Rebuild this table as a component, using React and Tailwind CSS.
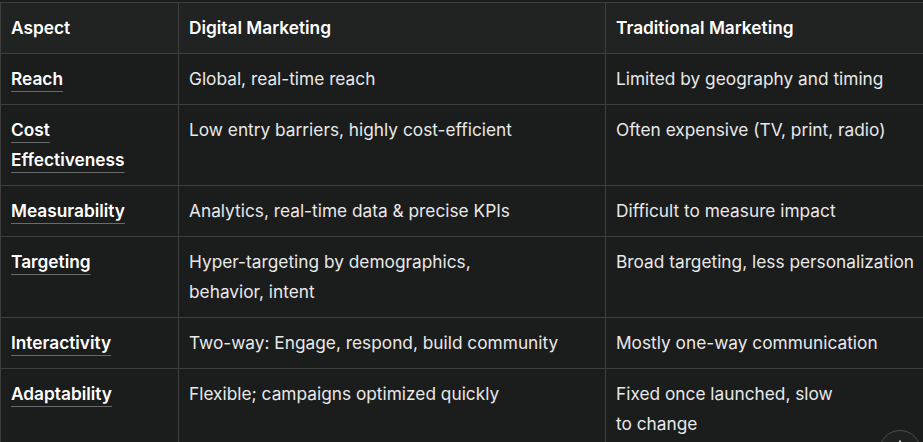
import React from 'react';

const rows = [
  { aspect: 'Reach', digital: 'Global, real-time reach', traditional: 'Limited by geography and timing' },
  { aspect: ['Cost', 'Effectiveness'], digital: 'Low entry barriers, highly cost-efficient', traditional: 'Often expensive (TV, print, radio)' },
  { aspect: 'Measurability', digital: 'Analytics, real-time data & precise KPIs', traditional: 'Difficult to measure impact' },
  { aspect: 'Targeting', digital: ['Hyper-targeting by demographics,', 'behavior, intent'], traditional: 'Broad targeting, less personalization' },
  { aspect: 'Interactivity', digital: 'Two-way: Engage, respond, build community', traditional: 'Mostly one-way communication' },
  { aspect: 'Adaptability', digital: 'Flexible; campaigns optimized quickly', traditional: ['Fixed once launched, slow', 'to change'] },
];

const lines = (v) =>
  Array.isArray(v)
    ? v.map((l, i) => (
        <React.Fragment key={i}>
          {i > 0 && <br />}
          {l}
        </React.Fragment>
      ))
    : v;

const App = () => {
  return (
    <div
      className="relative w-[923px] h-[442px] overflow-hidden bg-[#1b1c1c] pt-[2px] text-[17.3px] text-[#e9e9e9]"
      style={{ fontFamily: 'Inter, "Noto Sans", sans-serif' }}
    >
      <table className="w-[930px] table-fixed border-collapse">
        <colgroup>
          <col className="w-[178px]" />
          <col className="w-[427px]" />
          <col />
        </colgroup>
        <thead>
          <tr className="bg-[#212222]">
            {['Aspect', 'Digital Marketing', 'Traditional Marketing'].map((h) => (
              <th
                key={h}
                className="border border-[#3e3e3e] px-[10px] py-[10px] text-left font-semibold leading-[29px] pb-[11px] text-white"
              >
                {h}
              </th>
            ))}
          </tr>
        </thead>
        <tbody>
          {rows.map((r, i) => (
            <tr key={i}>
              <td className="border border-[#3e3e3e] px-[10px] pt-[10px] pb-[10px] align-top leading-[30px]">
                <span className="font-semibold text-white underline decoration-[#6a6a6a] decoration-1 underline-offset-[6px]">
                  {lines(r.aspect)}
                </span>
              </td>
              <td className="border border-[#3e3e3e] px-[10px] py-[10px] align-top leading-[30px]">
                {lines(r.digital)}
              </td>
              <td className="border border-[#3e3e3e] px-[10px] py-[10px] align-top leading-[30px]">
                {lines(r.traditional)}
              </td>
            </tr>
          ))}
        </tbody>
      </table>
      <button className="absolute left-[879px] top-[430px] flex h-[42px] w-[42px] items-start justify-center rounded-full border border-[#4a4a4a] bg-[#1f2020] pt-[8px] text-white">
        <svg width="16" height="16" viewBox="0 0 16 16" fill="none" stroke="currentColor" strokeWidth="1.6" strokeLinecap="round" strokeLinejoin="round">
          <path d="M8 2v11M3.5 8.5 8 13l4.5-4.5" />
        </svg>
      </button>
    </div>
  );
};

export default App;
